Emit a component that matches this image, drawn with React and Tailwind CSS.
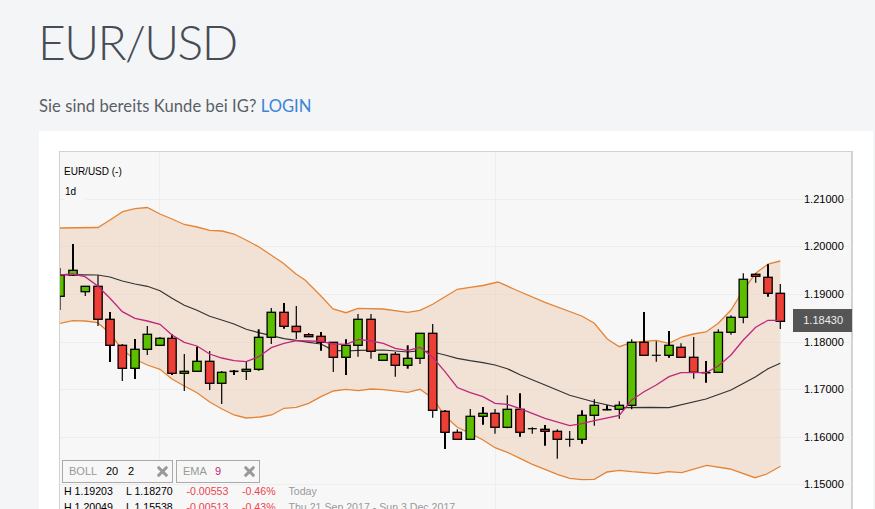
import React from "react";
import { X } from "lucide-react";

const C = [
  [60,268,310,275.3,296.3,"g",1],[73,244,276,270.3,275,"g",2],[85.3,286,296,286.3,291.7,"g",1],[98,275.3,326,286.3,319.3,"r",1],
  [110,312,362,319.3,345.3,"r",2],[122.3,344,381,345.3,368.3,"r",1],[135,339,379,349.3,368.3,"g",2],[147.3,326,355,334.3,349.3,"g",1],
  [160,337,345.7,338.3,345.3,"g",1],[172,334.3,375,338.3,373.3,"r",2],[184.3,354,391,371.3,373.3,"g",1],[197,346.7,371.7,361.3,371.3,"g",2],
  [209.7,351,390,361.3,383.3,"r",1],[221.7,371,404,372.3,383.3,"g",1],[234,370,375,371.3,371.3,"d",2],[246.3,362,380,369.3,371.3,"g",1],
  [258.7,329.3,370.7,337.3,369.3,"g",2],[271.3,308,344,312.3,337.3,"g",1],[284,303,328.7,312.3,326.3,"r",2],[296.3,306,339,326.3,331.7,"r",1],
  [308.7,333,336.7,334.7,336.7,"r",1],[321,332,350.7,336.3,342.3,"r",2],[333.3,342.3,372,342.3,357.3,"r",1],[346,339.3,375,345.3,357.3,"g",2],
  [358,314,356.7,319.3,345.3,"g",1],[371,314,358.7,319.3,351.3,"r",1],[383,354.3,360.3,354.3,360.3,"g",1],[395.3,352,376.7,354.3,365.3,"r",1],
  [407.7,345.3,368.7,358.3,365.3,"g",2],[420,333.3,364,333.3,358.3,"g",1],[432.7,324,417.7,333.3,410.3,"r",1],[445,410.3,449,411.3,432.3,"r",2],
  [457.3,429.3,439.3,432.3,439.3,"r",1],[470.3,409,439.3,416.3,439.3,"g",1],[483,407,424.7,413.3,416.3,"g",2],[495,409,433.7,413.3,427.3,"r",1],
  [507.3,395.3,428.3,409.3,427.3,"g",1],[520,393.3,436.7,409.3,432.3,"r",2],[532.3,427.3,433.7,428.7,428.7,"d",1],[545,425,445.7,429.3,431.3,"r",2],
  [557.3,429.3,458.7,431.3,439.3,"r",1],[569.7,431,446.7,439.3,439.3,"d",1],[582,410.3,443.7,415.3,439.3,"g",2],[594.3,399.3,425.7,405.3,415.3,"g",1],
  [607,405.3,410.3,409.7,409.7,"d",2],[619.3,401.3,418.7,405.3,409.3,"g",1],[631.7,339.3,409.3,342.3,405.3,"g",1],[644,312,342.3,342.3,355.3,"r",2],
  [656.3,341.3,361.7,355.3,355.3,"d",1],[669,331,357.7,345.3,355.3,"g",2],[681,343.3,357.3,347.3,357.3,"r",1],[693.7,337,378.7,357.3,372.3,"r",1],
  [706,361,382.7,372.7,372.7,"d",2],[718.3,329.3,372.3,332.3,372.3,"g",1],[731,315.3,334.7,317.3,332.3,"g",1],[743.3,273.3,323.3,279.3,317.3,"g",1],
  [755.7,273.3,282.7,274.3,276.3,"r",1],[768,264.3,296.7,277.3,293.3,"r",2],[780.3,284,329,293.3,321.3,"r",1],
];

const upper = "60,228 98,227.5 110,220 122.7,211.7 135,208.7 147.3,207.5 160,214 172,219 184.3,224.5 197,227 209.7,230.3 222,231 234,234 246,240 259,247 271,255 283,263 296,274 305,280 320,295 333,309 346,312.7 358,308.3 383,309 407.7,312.3 420,310.3 432.7,304.3 445,296.7 457.3,289.3 470,287.3 483,285.5 498,282 516,290 545,302.3 581.7,316 594.3,323.3 607.3,339 619.3,346.7 631.7,342.5 656,340.3 669,343.3 681.7,337 693.3,334 706,332 718.3,323.3 731,310 743.3,290 755.7,273.3 768,264 780.3,261";
const lower = "60,323.3 72.7,320.7 85,321 97.7,322.7 110,333.3 122.3,350 135,359.3 147.3,365 160,369.3 172,379 184.3,386 197,392.7 209.7,402 222,409 234,415 246,418 260,417 271.7,415 284,408.3 296.3,407.3 308.7,403.3 321,396.7 333.3,391 346,389.3 358.3,390.7 371,389 383.3,389.7 407.7,392.3 420,389.3 432.7,398.3 445,416 457.3,427.3 470.3,433.3 483,440 495,447.7 507.3,452.3 520,458.3 532.3,464.3 545,469.3 557.3,474.3 569.7,478.3 582,479.7 594.3,479.3 607,472 619.3,470.3 631.7,471.7 656.7,473.7 668,471.7 681.7,472.7 706.7,465.3 730,469 755,477.7 766.7,474 780.5,466.3";
const sma = "60,275 72.7,274.7 97.7,275 110,277 122.3,281 135,284 147.3,286.3 160,290.7 172,298.3 184.3,305.3 197,310.3 209.7,316.3 221.7,320 234,324 246.3,329.3 258.7,332.7 271.3,335.7 284,338.7 296.3,340.3 308.7,342.3 321,344 333.3,350.3 346,351 358.3,350.3 383.3,350 407.7,352 420,350.7 432.7,352 445,355 457.3,358.3 470,360.7 483,362.7 495,365 507.3,368.7 520,374.7 545,385 569.7,395.3 594.3,402 619.3,407.7 650,407.3 669,407.7 706,399 731,390 755.7,376.7 768,368.7 780.3,363.3";
const ema = "60,275 72.7,274 85,276.7 97.7,286 110,298.3 122.3,311.7 135,318.3 147.3,321 160,324.3 172,335 184.3,342.3 197,346 209.7,354 221.7,358 234,360.7 246.3,361.7 258.7,356.7 271.3,347.7 284,343.3 296.3,340.7 308.7,341 321,341.3 333.3,344 346,344.3 358.3,339.3 371,341 383.3,343.3 395.3,348.3 407.7,350.7 420,347.3 432.7,357.3 445,371.7 457.3,387.5 470.3,392.7 483,396.7 495,403.3 507.3,404.3 520,408.7 545,418.3 569.7,425.7 582,423.7 594.3,420.7 619.3,415.3 631.7,400 644,391.7 656.3,385 669,376.7 681,372.7 706,372.7 718.3,366 731,355 743.3,340 755.7,327.3 768,320.3 780.3,320.3";

const band = upper + " " + lower.split(" ").reverse().join(" ");
const ticks = [["1.21000",199],["1.20000",246],["1.19000",294],["1.18000",342],["1.17000",389],["1.16000",437],["1.15000",484]];
const COL = { g: "#5bbf00", r: "#ee3f36" };

function Candle({ c }) {
  const [x, hi, lo, top, bot, col, w] = c;
  return (
    <g>
      <line x1={x} x2={x} y1={hi} y2={lo} stroke="#000" strokeWidth={w === 2 ? 2 : 1.2} />
      {col === "d" ? (
        <line x1={x - 4.5} x2={x + 4.5} y1={top} y2={top} stroke="#000" strokeWidth={w === 2 ? 1.6 : 1.2} />
      ) : (
        <rect x={x - 4.2} y={top} width={8.4} height={bot - top} fill={COL[col]} stroke="#000" strokeWidth={1.3} />
      )}
    </g>
  );
}

function Chart() {
  return (
    <svg className="absolute left-0 top-0" width="792" height="357" viewBox="60 152 792 357" fontFamily="'Liberation Sans', sans-serif">
      {ticks.map(([t, y]) => (
        <line key={t} x1="60" x2="852" y1={y + 0.5} y2={y + 0.5} stroke="#eeeeee" strokeWidth="1" />
      ))}
      <line x1="159.5" x2="159.5" y1="152" y2="509" stroke="#eeeeee" />
      <line x1="495.5" x2="495.5" y1="152" y2="509" stroke="#eeeeee" />
      <polygon points={band} fill="#ebc8aa" fillOpacity="0.45" />
      <polyline points={upper} fill="none" stroke="#e58436" strokeWidth="1.3" />
      <polyline points={lower} fill="none" stroke="#e58436" strokeWidth="1.3" />
      <polyline points={sma} fill="none" stroke="#333333" strokeWidth="1.2" />
      {C.map((c, i) => <Candle key={i} c={c} />)}
      <polyline points={ema} fill="none" stroke="#c0257f" strokeWidth="1.3" />
      {ticks.map(([t, y]) => (
        <text key={t} x="804" y={y + 4} fontSize="11" fill="#000">{t}</text>
      ))}
    </svg>
  );
}

function Stat({ h, l, a, b, d }) {
  return (
    <div className="flex h-4 items-center whitespace-nowrap text-[10.6px] leading-4">
      <span className="w-[62px] text-black">H {h}</span>
      <span className="w-[60.5px] text-black">L {l}</span>
      <span className="w-[55.5px] text-[#ea4650]">{a}</span>
      <span className="w-[46.5px] text-[#ea4650]">{b}</span>
      <span className="text-[#999999]">{d}</span>
    </div>
  );
}

export default function App() {
  return (
    <div className="h-[509px] overflow-hidden bg-[#f4f5f7] pl-[39px] pr-[2px]" style={{ fontFamily: "Lato, sans-serif" }}>
      <h1 className="-ml-[1px] h-[94px] pt-[12px] text-[48px] font-light leading-[60px] tracking-[-1.6px] text-[#474c55]">EUR/USD</h1>
      <p className="h-[37px] pt-[0.5px] text-[16.6px] leading-[22px] text-[#5a5f66]">
        <span className="tracking-[0.06px]">Sie sind bereits Kunde bei IG? </span><a className="text-[#3b84d9]">LOGIN</a>
      </p>
      <div className="h-[400px] bg-white p-5 font-['Liberation_Sans',sans-serif]">
        <div className="relative h-[380px] border-l border-r-2 border-t border-[#d2d2ce] bg-[#f7f7f7]">
          <Chart />
          <div className="absolute left-[4px] top-[13px] text-[10px] leading-[14px] text-black">EUR/USD (-)</div>
          <div className="absolute left-[5px] top-[32px] bg-[#f7f7f7] pr-[10px] text-[10px] leading-[16px] text-black">1d</div>
          <div className="absolute left-[2px] top-[308px] flex gap-[3px]">
            <div className="flex h-[23px] w-[111px] items-center border border-[#aaaaaa] bg-[#f7f7f7] pl-[6px] text-[11px]">
              <span className="w-[37px] text-[#999999]">BOLL</span>
              <span className="w-[22px] text-black">20</span>
              <span className="w-[27px] text-black">2</span>
              <X size={15} strokeWidth={5} className="text-[#999999]" />
            </div>
            <div className="flex h-[23px] w-[84px] items-center border border-[#aaaaaa] bg-[#f7f7f7] pl-[6px] text-[11px]">
              <span className="w-[32px] text-[#999999]">EMA</span>
              <span className="w-[27px] text-[#c0257f]">9</span>
              <X size={15} strokeWidth={5} className="text-[#999999]" />
            </div>
          </div>
          <div className="absolute left-[4px] top-[331px]">
            <Stat h="1.19203" l="1.18270" a="-0.00553" b="-0.46%" d="Today" />
            <Stat h="1.20049" l="1.15538" a="-0.00513" b="-0.43%" d="Thu 21 Sep 2017 - Sun 3 Dec 2017" />
          </div>
          <div className="absolute left-[733px] top-[157px] flex h-[23px] w-[59px] items-center justify-end bg-[#555555] pr-[9px] text-[11px] text-[#eeeeee]">1.18430</div>
        </div>
      </div>
    </div>
  );
}
